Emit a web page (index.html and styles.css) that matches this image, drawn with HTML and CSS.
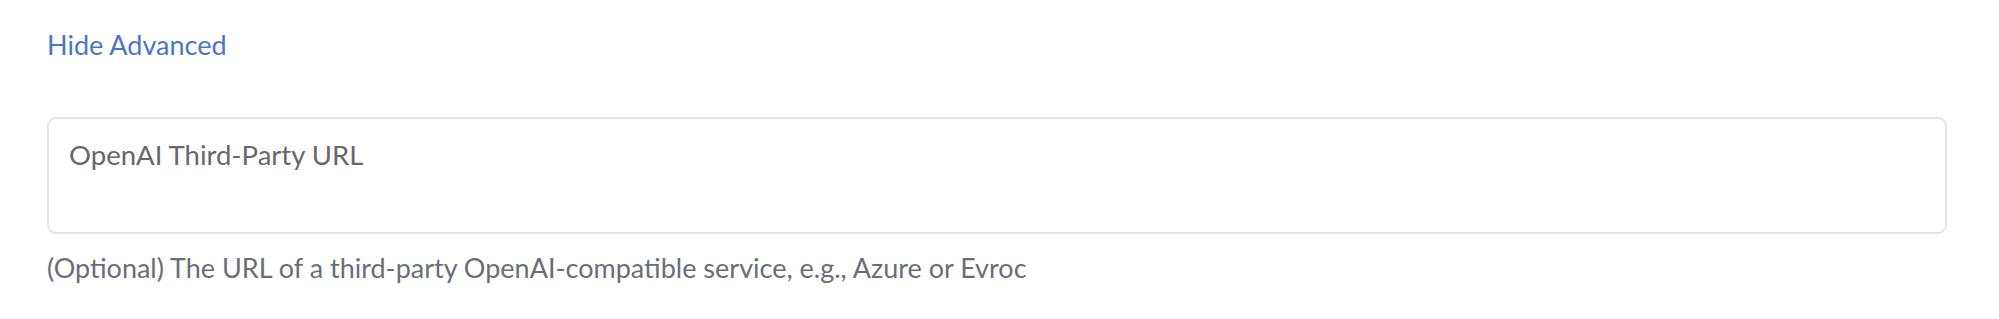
FILE: index.html
```html
<!DOCTYPE html>
<html lang="en">
<head>
    <meta charset="UTF-8">
    <title>Advanced Settings</title>
    <link rel="stylesheet" href="styles.css">
</head>
<body>
    <div class="settings">
        <a class="toggle-link" href="#">Hide Advanced</a>
        <div class="field">
            <textarea class="field-input" placeholder="OpenAI Third-Party URL"></textarea>
            <div class="field-help">(Optional) The URL of a third-party OpenAI-compatible service, e.g., Azure or Evroc</div>
        </div>
    </div>
</body>
</html>
```

FILE: styles.css
```css
body {
    margin: 0;
    font-family: 'Lato', sans-serif;
    background: #fff;
    color: #333;
}
.settings {
    padding: 25px 52px 0 47px;
}
.toggle-link {
    display: inline-block;
    font-size: 27px;
    line-height: 40px;
    color: #4a76c9;
    text-decoration: none;
}
.field {
    margin-top: 52px;
}
.field-input {
    display: block;
    box-sizing: border-box;
    width: 100%;
    height: 117px;
    padding: 19px 20px;
    border: 2px solid #e4e4ea;
    border-radius: 9px;
    font-family: 'Lato', sans-serif;
    font-size: 27.5px;
    resize: none;
    outline: none;
}
.field-input::placeholder {
    color: #68686b;
}
.field-help {
    margin-top: 17px;
    font-size: 27px;
    line-height: 34px;
    color: #6b6e77;
}
```
